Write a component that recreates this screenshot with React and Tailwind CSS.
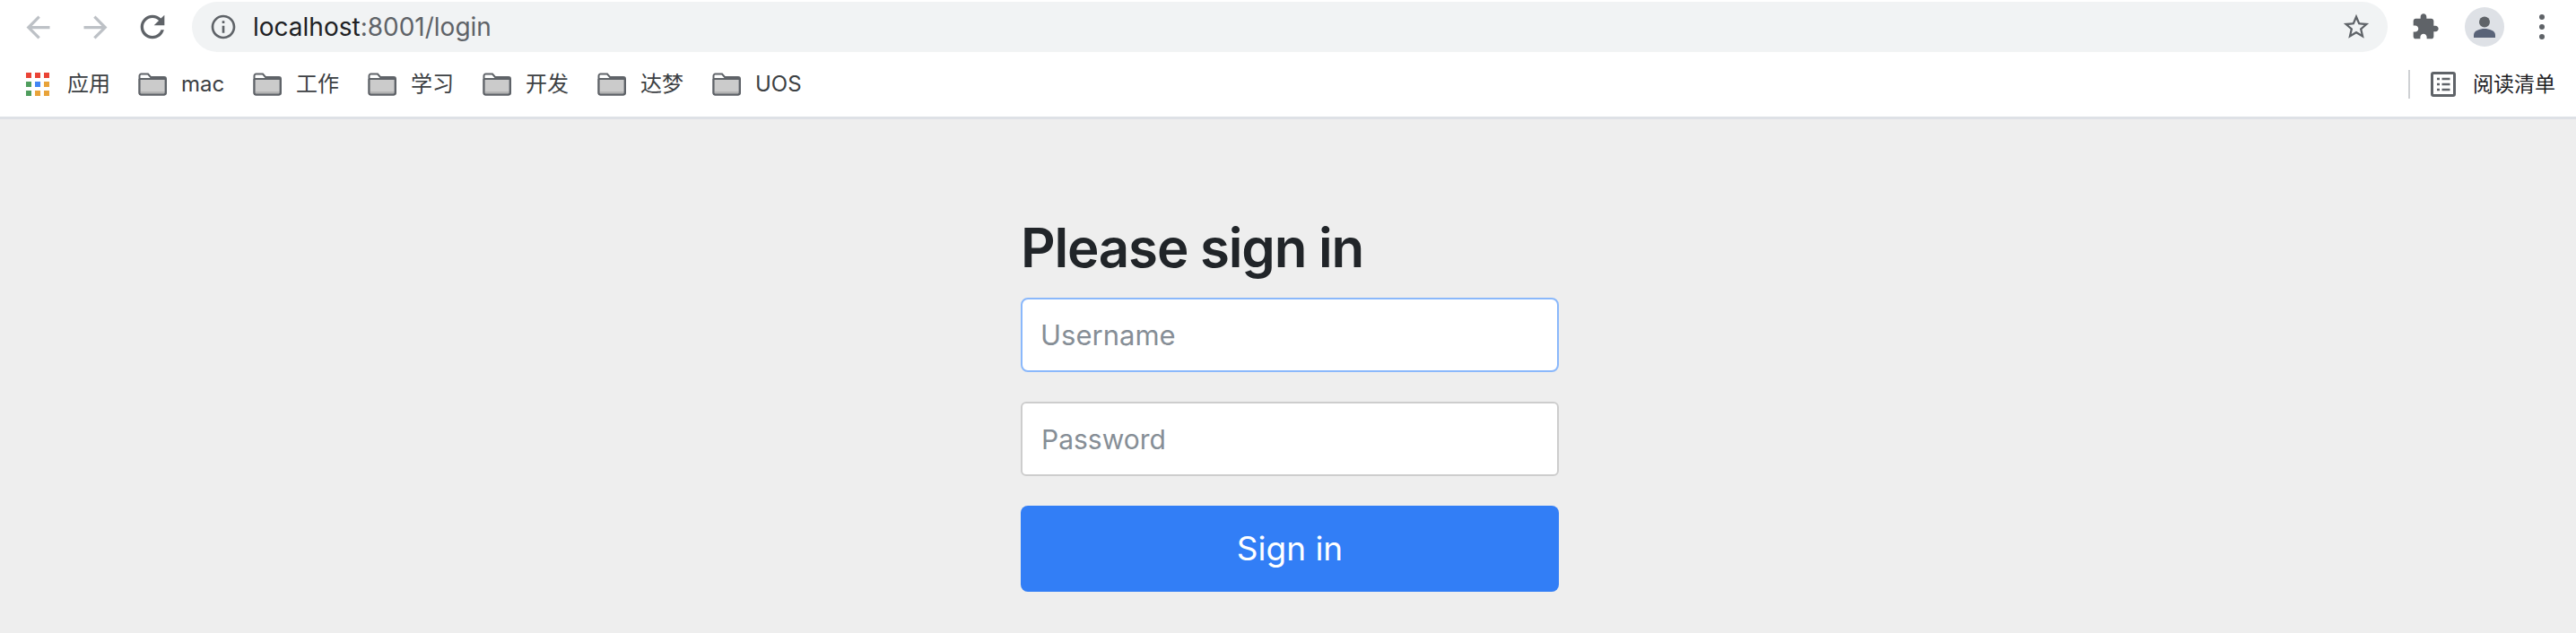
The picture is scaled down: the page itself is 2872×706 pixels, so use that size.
const bookmarks = ['mac', '工作', '学习', '开发', '达梦', 'UOS'];
const cjk = '"Inter", "Noto Sans CJK SC", sans-serif';

function Icon({ d, size, color, className = '' }) {
  return (
    <svg width={size} height={size} viewBox="0 0 24 24" fill={color} className={className}>
      <path d={d} />
    </svg>
  );
}

function NavButton({ children }) {
  return <div className="w-16 h-full flex items-center justify-center shrink-0">{children}</div>;
}

function Folder() {
  return (
    <svg width="32" height="26" viewBox="0 0 32 26" className="shrink-0">
      <path d="M1.500 3.500a2 2 0 0 1 2-2h7.500l3 3.500h15a2 2 0 0 1 2 2v15.500a2 2 0 0 1-2 2h-25.500a2 2 0 0 1-2-2z" fill="#fff" stroke="#5f6368" strokeWidth="2" />
      <path d="M2.500 8h27v15.500h-27z" fill="#cbcbcb" />
      <path d="M2 7h28" stroke="#5f6368" strokeWidth="2" />
      <path d="M2.500 21h27v2.500h-27z" fill="#b4b4b4" />
      <path d="M1.500 7v15.500a2 2 0 0 0 2 2h25a2 2 0 0 0 2-2v-15.500" fill="none" stroke="#5f6368" strokeWidth="2" />
    </svg>
  );
}

function AppsGrid() {
  const colors = ['#ea4335', '#ea4335', '#ea4335', '#4f9d5d', '#4285f4', '#e8a33a', '#4f9d5d', '#e8a33a', '#e8a33a'];
  return (
    <div className="grid grid-cols-3 gap-[4px] w-[26px] shrink-0">
      {colors.map((c, i) => (
        <div key={i} className="w-[6px] h-[6px]" style={{ background: c }} />
      ))}
    </div>
  );
}

function Toolbar() {
  return (
    <div className="h-[60px] flex items-center pl-[10px] pr-[35px]">
      <NavButton>
        <Icon size={39} color="#bdc1c6" d="M20 11H7.830l5.590-5.590L12 4l-8 8 8 8 1.410-1.410L7.830 13H20v-2z" />
      </NavButton>
      <NavButton>
        <Icon size={39} color="#bdc1c6" d="M4 13h12.170l-5.590 5.590L12 20l8-8-8-8-1.410 1.410L16.170 11H4v2z" />
      </NavButton>
      <NavButton>
        <Icon size={40} color="#5f6368" d="M17.650 6.350C16.200 4.900 14.210 4 12 4c-4.420 0-7.990 3.580-7.990 8s3.570 8 7.990 8c3.730 0 6.840-2.550 7.730-6h-2.080c-.820 2.330-3.040 4-5.650 4-3.310 0-6-2.690-6-6s2.690-6 6-6c1.660 0 3.140.690 4.220 1.780L13 11h7V4l-2.350 2.350z" />
      </NavButton>
      <div className="ml-[12px] flex-1 h-[56px] rounded-full bg-[#f1f3f4] flex items-center pl-[19px] pr-[18px]">
        <Icon size={32} color="#5f6368" d="M11 7h2v2h-2zm0 4h2v6h-2zm1-9C6.480 2 2 6.480 2 12s4.480 10 10 10 10-4.480 10-10S17.520 2 12 2zm0 18c-4.410 0-8-3.590-8-8s3.590-8 8-8 8 3.590 8 8-3.590 8-8 8z" />
        <div className="ml-[17px] flex-1 text-[28px] leading-none text-[#5f6368]">
          <span className="text-[#202124]">localhost</span>:8001/login
        </div>
        <Icon size={34} color="#5f6368" d="M22 9.240l-7.190-.620L12 2 9.190 8.630 2 9.240l5.460 4.730L5.820 21 12 17.270 18.180 21l-1.630-7.030L22 9.240zM12 15.400l-3.760 2.270 1-4.280-3.320-2.880 4.380-.380L12 6.100l1.710 4.040 4.380.380-3.320 2.880 1 4.280L12 15.400z" />
      </div>
      <div className="w-[58px] flex justify-end shrink-0">
        <Icon size={32} color="#5f6368" d="M20.500 11H19V7c0-1.100-.9-2-2-2h-4V3.500C13 2.120 11.880 1 10.500 1S8 2.120 8 3.500V5H4c-1.100 0-1.990.9-1.990 2v3.800H3.500c1.490 0 2.700 1.210 2.700 2.700s-1.210 2.700-2.700 2.700H2V20c0 1.100.9 2 2 2h3.800v-1.500c0-1.490 1.210-2.700 2.700-2.700 1.490 0 2.700 1.210 2.700 2.700V22H17c1.100 0 2-.9 2-2v-4h1.500c1.380 0 2.500-1.120 2.500-2.500S21.880 11 20.500 11z" />
      </div>
      <div className="ml-[28px] w-[44px] h-[44px] rounded-full bg-[#dee1e6] flex items-center justify-center shrink-0">
        <svg width="30" height="30" viewBox="0 0 30 30">
          <circle cx="15" cy="9.500" r="6" fill="#5f6368" />
          <path d="M3 27v-3c0-5 7-7 12-7s12 2 12 7v3z" fill="#596378" />
        </svg>
      </div>
      <div className="ml-[39px] flex flex-col gap-[5px] w-[6px] shrink-0">
        <div className="w-[6px] h-[6px] rounded-full bg-[#5f6368]" />
        <div className="w-[6px] h-[6px] rounded-full bg-[#5f6368]" />
        <div className="w-[6px] h-[6px] rounded-full bg-[#5f6368]" />
      </div>
    </div>
  );
}

function BookmarkBar() {
  return (
    <div className="h-[70px] pb-[2px] flex items-center pl-[29px] pr-[23px] text-[24px] leading-none text-[#3c4043]" style={{ fontFamily: cjk }}>
      <AppsGrid />
      <span className="ml-[20px] mr-[31px] w-[48px] whitespace-nowrap">应用</span>
      {bookmarks.map((name) => (
        <div key={name} className="flex items-center gap-[16px] w-[128px]">
          <Folder />
          <span>{name}</span>
        </div>
      ))}
      <div className="ml-auto w-[2px] h-[32px] bg-[#cfd1d4]" />
      <svg width="28" height="28" viewBox="0 0 28 28" className="ml-[23px]">
        <rect x="1.500" y="1.500" width="25" height="25" rx="1.500" fill="none" stroke="#5f6368" strokeWidth="3" />
        <path d="M7 8h3M7 14h3M7 20h3M12.500 8h9M12.500 14h9M12.500 20h9" stroke="#5f6368" strokeWidth="2.500" />
      </svg>
      <span className="ml-[19px] text-[#202124] text-[23px]">阅读清单</span>
    </div>
  );
}

function LoginForm() {
  return (
    <div className="w-[600px]">
      <h1 className="text-[60px] leading-[77px] font-semibold tracking-[-0.02em] text-[#212529]">Please sign in</h1>
      <input
        placeholder="Username"
        className="mt-[17px] w-full h-[83px] px-[20px] rounded-[8px] bg-white border-2 border-[#8ab8fb] text-[31px] outline-none placeholder:text-[#868e96]"
      />
      <input
        placeholder="Password"
        className="mt-[33px] w-full h-[83px] px-[21px] rounded-[6px] bg-white border-2 border-[#cdcdcd] text-[30px] outline-none placeholder:text-[#868e96]"
      />
      <button className="mt-[33px] w-full h-[96px] rounded-[8px] bg-[#327ef6] text-white text-[37px]">
        Sign in
      </button>
    </div>
  );
}

export default function App() {
  return (
    <div className="h-screen flex flex-col bg-white overflow-hidden" style={{ fontFamily: 'Inter, sans-serif' }}>
      <Toolbar />
      <BookmarkBar />
      <div className="h-[3px] bg-[#dee1e6]" />
      <div className="flex-1 bg-[#eeeeee] flex justify-center pl-[4px] pt-[105px]">
        <LoginForm />
      </div>
    </div>
  );
}
